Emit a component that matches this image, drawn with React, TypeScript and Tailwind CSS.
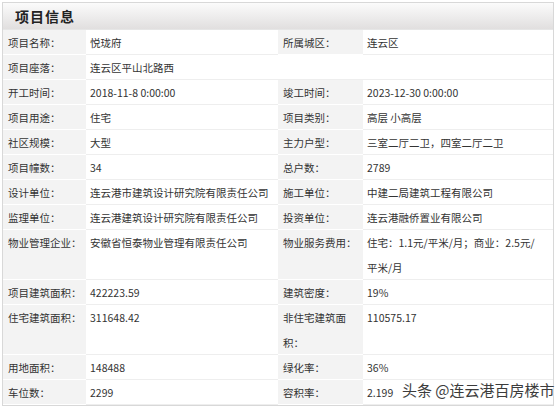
import React from "react";

type Cell = { label: React.ReactNode; value: React.ReactNode };
type Row = { cells: Cell[]; tall?: boolean; wide?: boolean };

const rows: Row[] = [
  { cells: [{ label: "项目名称：", value: "悦珑府" }, { label: "所属城区：", value: "连云区" }] },
  { cells: [{ label: "项目座落：", value: "连云区平山北路西" }], wide: true },
  { cells: [{ label: "开工时间：", value: "2018-11-8 0:00:00" }, { label: "竣工时间：", value: "2023-12-30 0:00:00" }] },
  { cells: [{ label: "项目用途：", value: "住宅" }, { label: "项目类别：", value: "高层 小高层" }] },
  { cells: [{ label: "社区规模：", value: "大型" }, { label: "主力户型：", value: "三室二厅二卫，四室二厅二卫" }] },
  { cells: [{ label: "项目幢数：", value: "34" }, { label: "总户数：", value: "2789" }] },
  { cells: [{ label: "设计单位：", value: "连云港市建筑设计研究院有限责任公司" }, { label: "施工单位：", value: "中建二局建筑工程有限公司" }] },
  { cells: [{ label: "监理单位：", value: "连云港建筑设计研究院有限责任公司" }, { label: "投资单位：", value: "连云港融侨置业有限公司" }] },
  {
    tall: true,
    cells: [
      { label: "物业管理企业：", value: "安徽省恒泰物业管理有限责任公司" },
      { label: "物业服务费用：", value: <>住宅：1.1元/平米/月；商业：2.5元/<br />平米/月</> },
    ],
  },
  { cells: [{ label: "项目建筑面积：", value: "422223.59" }, { label: "建筑密度：", value: "19%" }] },
  {
    tall: true,
    cells: [
      { label: "住宅建筑面积：", value: "311648.42" },
      { label: <>非住宅建筑面<br />积：</>, value: "110575.17" },
    ],
  },
  { cells: [{ label: "用地面积：", value: "148488" }, { label: "绿化率：", value: "36%" }] },
  { cells: [{ label: "车位数：", value: "2299" }, { label: "容积率：", value: "2.199" }] },
];

const labelCls = "bg-[#f3f3f3] border-b border-white pl-[5px] leading-[25px] whitespace-nowrap overflow-hidden";
const valueCls = "border-b border-[#eeeeee] pl-[4px] leading-[25px] whitespace-nowrap overflow-hidden";

export default function App() {
  return (
    <div
      className="relative w-[558px] h-[408px] bg-white text-[10.5px] text-[#333]"
      style={{ fontFamily: '"Noto Sans CJK SC", "Liberation Sans", sans-serif' }}
    >
      <div className="absolute left-[2px] top-[2px] w-[552px] border border-[#d8d8d8] bg-white">
        <div className="h-[27px] flex items-center pl-[12px] bg-gradient-to-b from-[#fbfbfb] to-[#e1dfdf] border-b border-[#e6e6e6]">
          <span className="text-[14px] font-bold text-[#222] tracking-[1px]">项目信息</span>
        </div>
        <div className="grid grid-cols-[83px_192px_85px_190px]">
          {rows.map((row, i) => {
            const h = row.tall ? "h-[50px]" : "h-[25px]";
            if (row.wide) {
              const c = row.cells[0];
              return (
                <React.Fragment key={i}>
                  <div className={`${h} ${labelCls}`}>{c.label}</div>
                  <div className={`${h} col-span-3 ${valueCls}`}>{c.value}</div>
                </React.Fragment>
              );
            }
            return (
              <React.Fragment key={i}>
                {row.cells.map((c, j) => (
                  <React.Fragment key={j}>
                    <div className={`${h} ${labelCls}`}>{c.label}</div>
                    <div className={`${h} ${valueCls}`}>{c.value}</div>
                  </React.Fragment>
                ))}
              </React.Fragment>
            );
          })}
        </div>
      </div>
      <div
        className="absolute left-[402px] top-[380px] text-[15px] text-[#3c3c3c] leading-[20px]"
        style={{ textShadow: "0 0 2px #fff, 0 0 2px #fff" }}
      >
        头条 @连云港百房楼市
      </div>
    </div>
  );
}
